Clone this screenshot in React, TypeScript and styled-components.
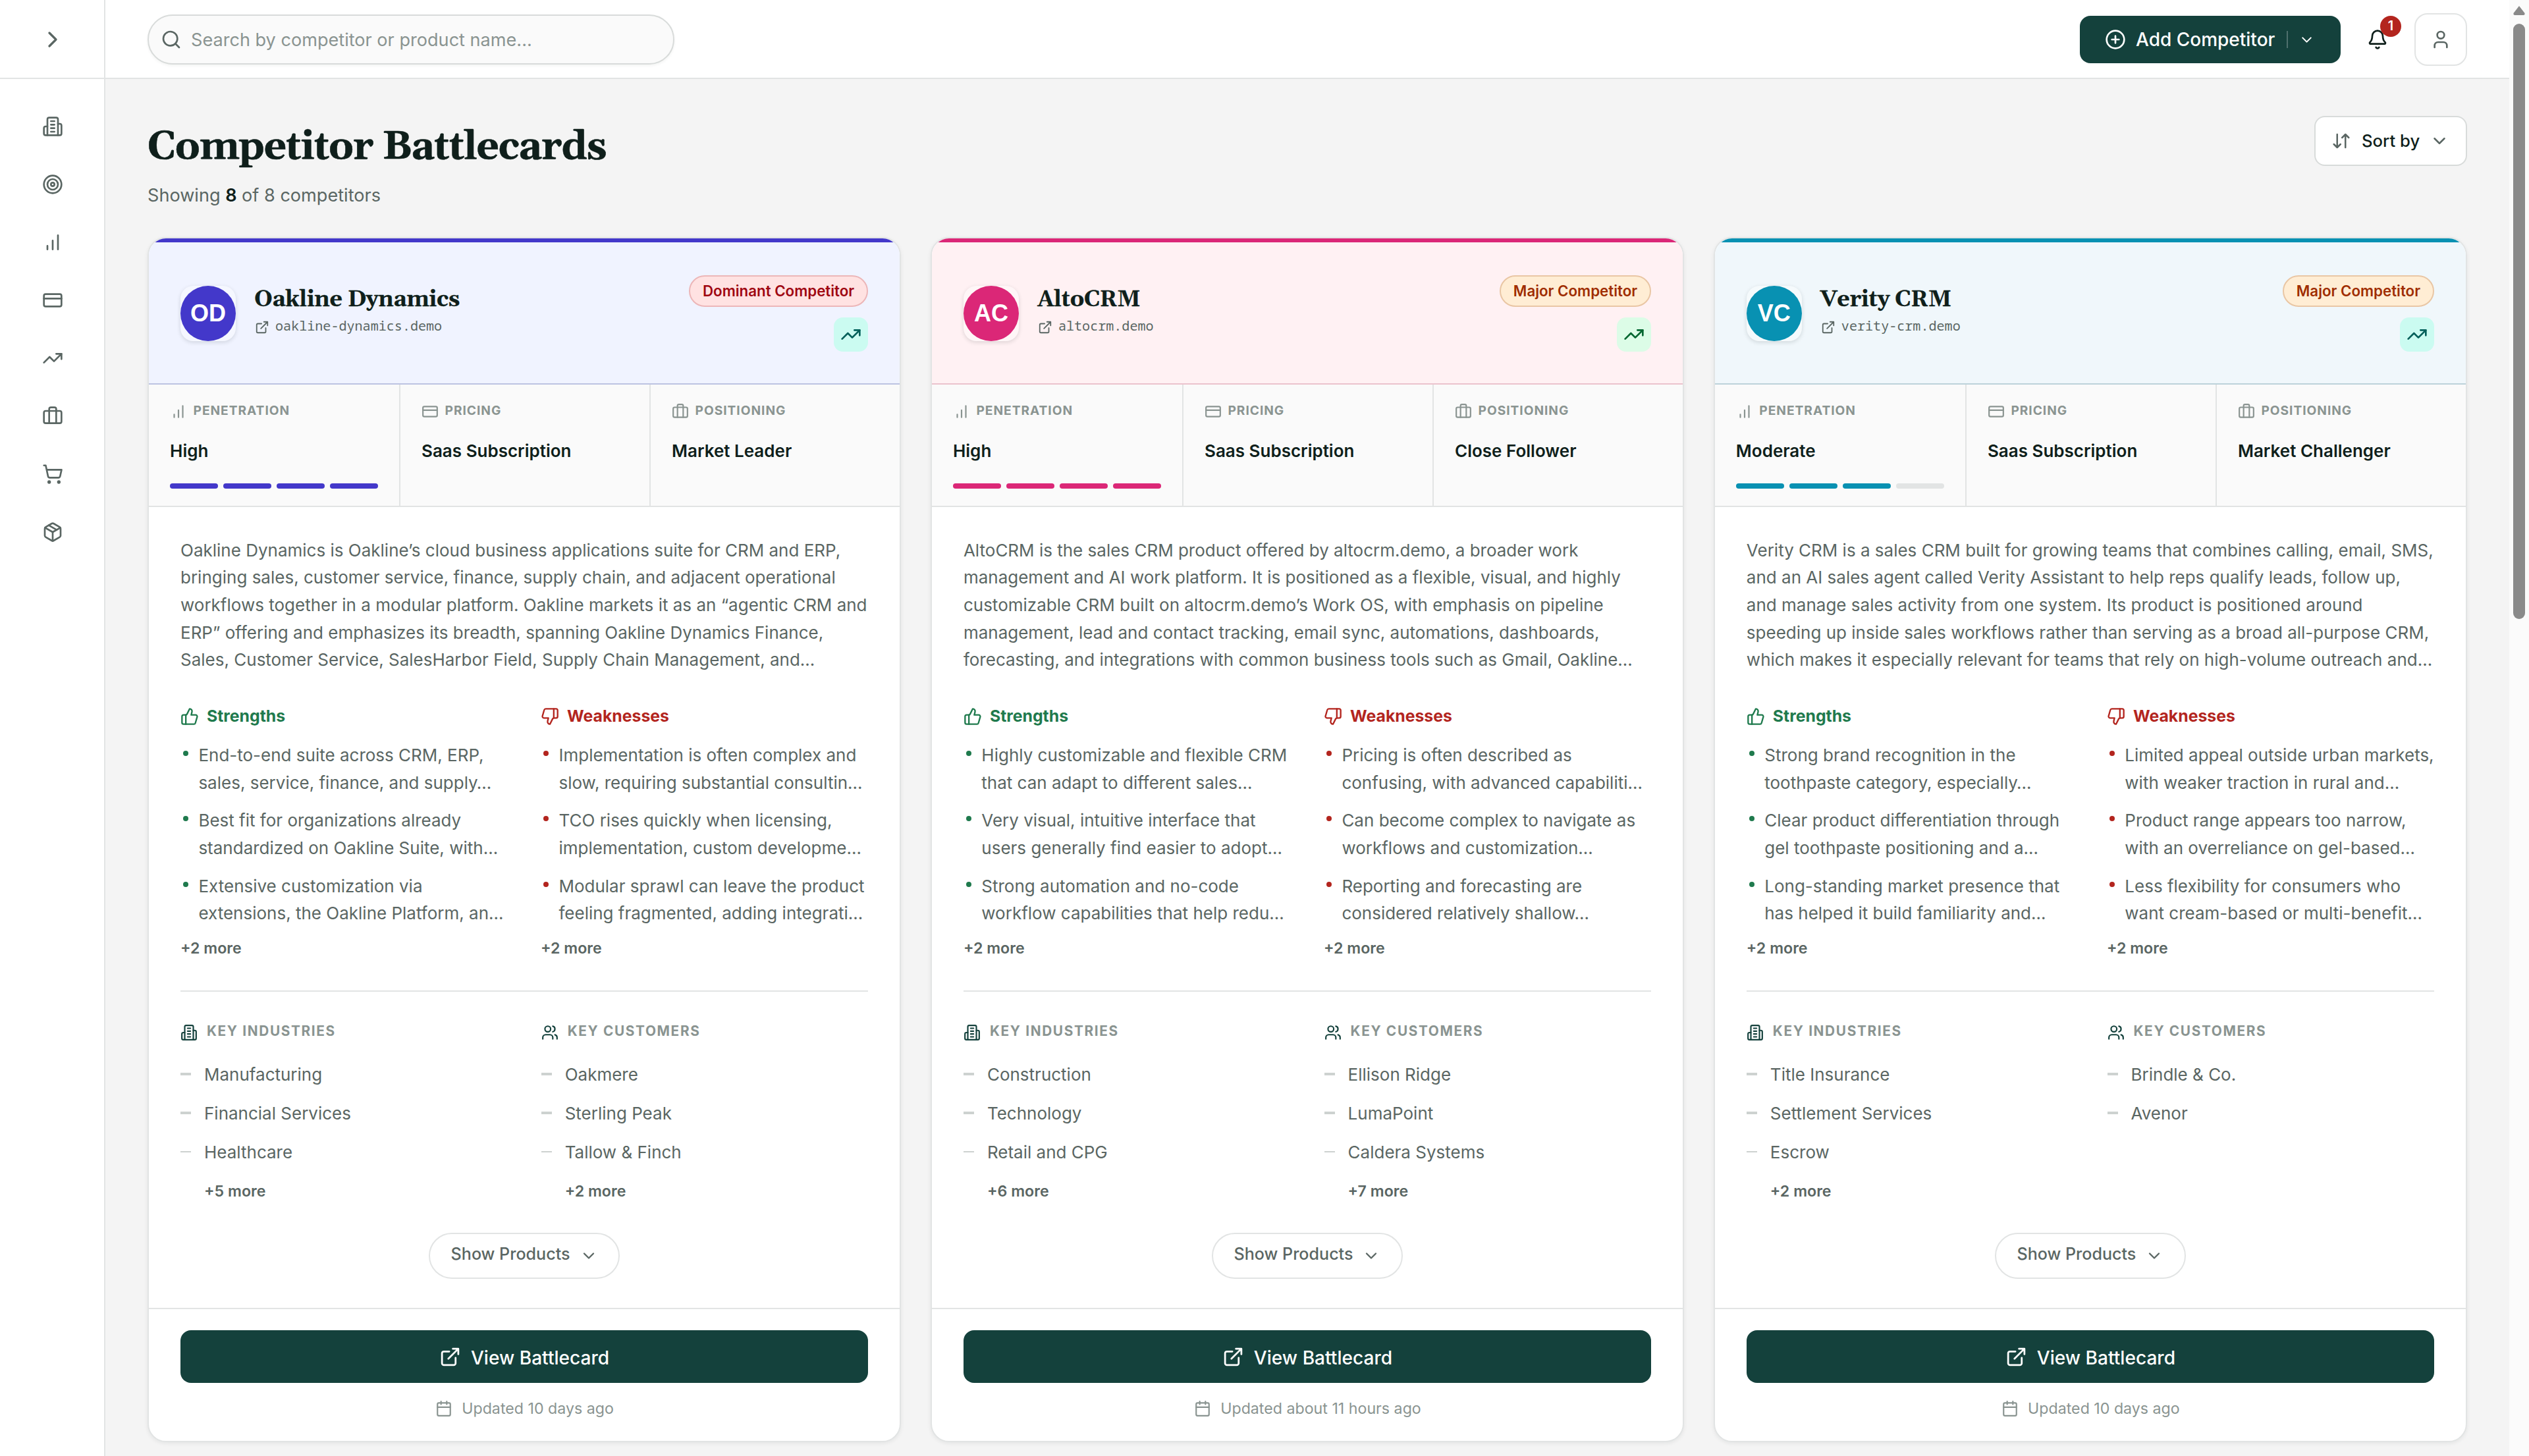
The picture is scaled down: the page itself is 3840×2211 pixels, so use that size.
import React from 'react';
import styled, { createGlobalStyle } from 'styled-components';

const SANS = `Inter, "Liberation Sans", sans-serif`;
const SERIF = `Gelasio, Georgia, "Liberation Serif", serif`;
const MONO = `"Noto Sans Mono", "DejaVu Sans Mono", "Liberation Mono", monospace`;

const ink = '#0f1f1b';
const body = '#5a6663';
const muted = '#8a9491';
const line = '#e2e4e4';
const brand = '#14413c';

const Global = createGlobalStyle`
  * { box-sizing: border-box; }
  html, body { margin: 0; padding: 0; background: #f4f4f4; }
  body { font-family: ${SANS}; color: ${ink}; overflow: hidden; }
  h1, h2, h3, p, ul { margin: 0; padding: 0; font-weight: inherit; }
  ul { list-style: none; }
  button { font: inherit; cursor: pointer; }
`;

/* ---------- icons ---------- */

const ICONS: Record<string, React.ReactNode> = {
  chevronRight: <path d="m9 18 6-6-6-6" />,
  chevronDown: <path d="m6 9 6 6 6-6" />,
  search: (<><circle cx="11" cy="11" r="8" /><path d="m21 21-4.3-4.3" /></>),
  building: (
    <>
      <path d="M6 22V4a2 2 0 0 1 2-2h8a2 2 0 0 1 2 2v18Z" />
      <path d="M6 12H4a2 2 0 0 0-2 2v6a2 2 0 0 0 2 2h2" />
      <path d="M18 9h2a2 2 0 0 1 2 2v9a2 2 0 0 1-2 2h-2" />
      <path d="M10 6h4M10 10h4M10 14h4M10 18h4" />
    </>
  ),
  target: (<><circle cx="12" cy="12" r="10" /><circle cx="12" cy="12" r="6" /><circle cx="12" cy="12" r="2" /></>),
  bars: <path d="M12 20V10M18 20V4M6 20v-4" />,
  card: (<><rect x="2" y="5" width="20" height="14" rx="2" /><path d="M2 10h20" /></>),
  trend: (<><path d="m22 7-8.500 8.500-5-5L2 17" /><path d="M16 7h6v6" /></>),
  briefcase: (<><path d="M16 20V4a2 2 0 0 0-2-2h-4a2 2 0 0 0-2 2v16" /><rect x="2" y="6" width="20" height="14" rx="2" /></>),
  cart: (
    <>
      <circle cx="8" cy="21" r="1" /><circle cx="19" cy="21" r="1" />
      <path d="M2.050 2.050h2l2.660 12.420a2 2 0 0 0 2 1.580h9.780a2 2 0 0 0 1.950-1.570l1.650-7.430H5.120" />
    </>
  ),
  box: (
    <>
      <path d="m7.500 4.270 9 5.150" />
      <path d="M21 8a2 2 0 0 0-1-1.730l-7-4a2 2 0 0 0-2 0l-7 4A2 2 0 0 0 3 8v8a2 2 0 0 0 1 1.730l7 4a2 2 0 0 0 2 0l7-4A2 2 0 0 0 21 16Z" />
      <path d="m3.300 7 8.700 5 8.700-5" /><path d="M12 22V12" />
    </>
  ),
  plus: (<><circle cx="12" cy="12" r="10" /><path d="M8 12h8M12 8v8" /></>),
  bell: (
    <>
      <path d="M10.268 21a2 2 0 0 0 3.464 0" />
      <path d="M3.262 15.326A1 1 0 0 0 4 17h16a1 1 0 0 0 .74-1.673C19.410 13.956 18 12.499 18 8A6 6 0 0 0 6 8c0 4.499-1.411 5.956-2.738 7.326" />
    </>
  ),
  user: (<><path d="M19 21v-2a4 4 0 0 0-4-4H9a4 4 0 0 0-4 4v2" /><circle cx="12" cy="7" r="4" /></>),
  sort: <path d="m3 16 4 4 4-4M7 20V4M21 8l-4-4-4 4M17 4v16" />,
  external: (
    <>
      <path d="M15 3h6v6M10 14 21 3" />
      <path d="M18 13v6a2 2 0 0 1-2 2H5a2 2 0 0 1-2-2V8a2 2 0 0 1 2-2h6" />
    </>
  ),
  up: (
    <>
      <path d="M7 10v12" />
      <path d="M15 5.880 14 10h5.830a2 2 0 0 1 1.920 2.560l-2.330 8A2 2 0 0 1 17.500 22H4a2 2 0 0 1-2-2v-8a2 2 0 0 1 2-2h2.760a2 2 0 0 0 1.790-1.110L12 2a3.130 3.130 0 0 1 3 3.880Z" />
    </>
  ),
  down: (
    <>
      <path d="M17 14V2" />
      <path d="M9 18.120 10 14H4.170a2 2 0 0 1-1.920-2.560l2.330-8A2 2 0 0 1 6.500 2H20a2 2 0 0 1 2 2v8a2 2 0 0 1-2 2h-2.760a2 2 0 0 0-1.790 1.110L12 22a3.130 3.130 0 0 1-3-3.880Z" />
    </>
  ),
  users: (
    <>
      <path d="M16 21v-2a4 4 0 0 0-4-4H6a4 4 0 0 0-4 4v2" /><circle cx="9" cy="7" r="4" />
      <path d="M22 21v-2a4 4 0 0 0-3-3.870M16 3.130a4 4 0 0 1 0 7.750" />
    </>
  ),
  calendar: (<><path d="M8 2v4M16 2v4M3 10h18" /><rect x="3" y="4" width="18" height="18" rx="2" /></>),
};

const Svg = styled.svg<{ $size: number }>`
  display: block;
  flex: none;
  width: ${(p) => p.$size}px;
  height: ${(p) => p.$size}px;
  fill: none;
  stroke: currentColor;
  stroke-linecap: round;
  stroke-linejoin: round;
`;

const Icon = ({ name, size = 32, stroke = 2 }: { name: string; size?: number; stroke?: number }) => (
  <Svg viewBox="0 0 24 24" $size={size} strokeWidth={stroke} aria-hidden>
    {ICONS[name]}
  </Svg>
);

/* ---------- shell ---------- */

const Shell = styled.div`
  display: grid;
  grid-template-columns: 160px minmax(0, 1fr) 30px;
  height: 2211px;
  overflow: hidden;
`;

const Sidebar = styled.aside`
  background: #fff;
  border-right: 2px solid ${line};
  color: ${body};
`;

const SidebarTop = styled.div`
  height: 120px;
  width: 158px;
  padding: 2px 0 0 2px;
  display: flex;
  align-items: center;
  justify-content: center;
  border-bottom: 2px solid ${line};
`;

const SideNav = styled.nav`
  display: flex;
  flex-direction: column;
  align-items: center;
  gap: 56px;
  padding: 56px 0 0 2px;
`;

const Main = styled.div`
  min-width: 0;
  display: flex;
  flex-direction: column;
`;

const TopBar = styled.header`
  flex: none;
  height: 120px;
  padding: 0 64px;
  display: flex;
  align-items: center;
  justify-content: space-between;
  background: #fff;
  border-bottom: 2px solid ${line};
`;

const Search = styled.label`
  width: 800px;
  height: 76px;
  margin-top: 2px;
  padding-left: 18px;
  display: flex;
  align-items: center;
  gap: 14px;
  border: 2px solid #d8dbda;
  border-radius: 38px;
  background: #fafafa;
  box-shadow: 0 2px 4px rgba(15, 31, 27, 0.05);
  color: ${body};
`;

const SearchText = styled.span`
  margin-top: 1px;
  font-size: 27.1px;
  color: ${muted};
`;

const Tools = styled.div`
  display: flex;
  align-items: center;
  margin-top: 2px;
`;

const AddButton = styled.button`
  height: 72px;
  width: 396px;
  padding: 0 0 0 38px;
  display: flex;
  align-items: center;
  border: 0;
  border-radius: 16px;
  background: ${brand};
  color: #fff;
  font-size: 28px;
  font-weight: 500;
`;

const AddLabel = styled.span`
  margin: 0 18px 0 15px;
`;

const AddSplit = styled.span`
  width: 2px;
  height: 26px;
  margin-right: 16px;
  background: rgba(255, 255, 255, 0.25);
`;

const BellButton = styled.span`
  position: relative;
  margin: 0 40px;
  color: ${ink};
`;

const Count = styled.span`
  position: absolute;
  left: 20px;
  top: -20px;
  width: 32px;
  height: 32px;
  border-radius: 50%;
  background: #b3251e;
  color: #fff;
  font-size: 20px;
  font-weight: 600;
  line-height: 30px;
  text-align: center;
`;

const UserButton = styled.button`
  width: 80px;
  height: 80px;
  padding: 0;
  display: flex;
  align-items: center;
  justify-content: center;
  border: 2px solid ${line};
  border-radius: 20px;
  background: #fff;
  color: ${body};
`;

const Track = styled.div`
  background: #fbfbfb;
  display: flex;
  flex-direction: column;
  align-items: center;
  padding-top: 9px;
`;

const Arrow = styled.svg`
  display: block;
  width: 18px;
  height: 14px;
  fill: #8a8a8a;
`;

const Thumb = styled.div`
  width: 18px;
  height: 904px;
  margin-top: 13px;
  border-radius: 9px;
  background: #8a8a8a;
`;

/* ---------- page ---------- */

const Page = styled.main`
  padding: 56px 64px 0;
  flex: 1;
  background: #f4f4f4;
`;

const PageHead = styled.div`
  height: 184px;
  display: flex;
  justify-content: space-between;
  align-items: flex-start;
`;

const Title = styled.h1`
  font-family: ${SERIF};
  font-size: 60px;
  font-weight: 700;
  line-height: 72px;
  padding-top: 12px;
  letter-spacing: -1.2px;
  -webkit-text-stroke: 0.6px ${ink};
`;

const Showing = styled.p`
  margin-top: 17px;
  font-size: 27.1px;
  line-height: 40px;
  color: ${body};

  b {
    font-weight: 600;
    color: ${ink};
  }
`;

const SortButton = styled.button`
  width: 232px;
  height: 76px;
  padding: 0 0 0 24px;
  display: flex;
  align-items: center;
  border: 2px solid #d8dbda;
  border-radius: 16px;
  background: #fff;
  font-size: 25.7px;
  font-weight: 500;
  color: ${body};

  span {
    margin: -2px 15px 0 16px;
    color: ${ink};
  }
`;

const Cards = styled.div`
  display: grid;
  grid-template-columns: repeat(3, minmax(0, 1fr));
  gap: 44.8px;
`;

const Card = styled.article`
  height: 1830px;
  display: flex;
  flex-direction: column;
  overflow: hidden;
  border: 2px solid ${line};
  border-radius: 28px;
  background: #fff;
  box-shadow: 0 2px 6px rgba(15, 31, 27, 0.07);
`;

const CardHead = styled.header<{ $accent: string; $tint: string; $edge: string }>`
  height: 222px;
  padding: 50px 48px 48px;
  display: flex;
  align-items: center;
  border-top: 6px solid ${(p) => p.$accent};
  border-bottom: 2px solid ${(p) => p.$edge};
  background: ${(p) => p.$tint};
`;

const AvatarFrame = styled.div`
  width: 84px;
  height: 84px;
  margin-right: 28px;
  border-radius: 20px;
  background: rgba(255, 255, 255, 0.35);
  box-shadow: 0 2px 6px rgba(15, 31, 27, 0.14);
`;

const Avatar = styled.div<{ $accent: string }>`
  height: 84px;
  border-radius: 50%;
  background: ${(p) => p.$accent};
  color: #fff;
  font: 700 36px/84px "Liberation Sans", sans-serif;
  text-align: center;
`;

const Identity = styled.div`
  flex: 1;
  min-width: 0;
  margin-top: -9px;
`;

const Name = styled.h2`
  font-family: ${SERIF};
  font-size: 34px;
  font-weight: 700;
  line-height: 44px;
  letter-spacing: -0.4px;
  -webkit-text-stroke: 0.3px ${ink};
`;

const Domain = styled.div`
  display: flex;
  align-items: center;
  gap: 9px;
  margin-top: 2px;
  padding-left: 1px;
  font-family: ${MONO};
  font-size: 20.1px;
  line-height: 32px;
  color: ${body};

  svg {
    margin-top: 4px;
  }
`;

const Flags = styled.div`
  display: flex;
  flex-direction: column;
  align-items: flex-end;
  gap: 16px;
`;

const Threat = styled.span<{ $dominant: boolean }>`
  height: 48px;
  padding: 0 19px;
  border: 2px solid ${(p) => (p.$dominant ? '#ecb6b8' : '#e9c6a4')};
  border-radius: 24px;
  background: ${(p) => (p.$dominant ? '#ffe2e2' : '#ffedd4')};
  color: ${(p) => (p.$dominant ? '#9f0712' : '#9f2d00')};
  font-size: 22.3px;
  font-weight: 600;
  line-height: 44px;
`;

const TrendTile = styled.span<{ $green: boolean }>`
  width: 52px;
  height: 52px;
  display: flex;
  align-items: center;
  justify-content: center;
  border-radius: 14px;
  background: ${(p) => (p.$green ? '#dcfce7' : '#cbfbf1')};
  color: ${(p) => (p.$green ? '#016630' : '#005f5a')};
`;

const Stats = styled.div`
  height: 186px;
  display: grid;
  grid-template-columns: repeat(3, 1fr);
  border-bottom: 2px solid ${line};
  background: #fafafa;
`;

const Stat = styled.div`
  padding: 24px 32px 0;

  & + & {
    border-left: 2px solid ${line};
  }
`;

const StatLabel = styled.div`
  display: flex;
  gap: 9.5px;
  font-size: 19.2px;
  font-weight: 700;
  line-height: 30px;
  letter-spacing: 0.96px;
  color: ${muted};

  svg {
    margin-top: 4px;
  }
`;

const StatValue = styled.div`
  margin-top: 27px;
  font-size: 26px;
  font-weight: 600;
  line-height: 40px;
`;

const Meter = styled.div`
  display: grid;
  grid-template-columns: repeat(4, 1fr);
  gap: 8px;
  margin-top: 29px;
`;

const Segment = styled.span<{ $color: string }>`
  height: 8px;
  border-radius: 4px;
  background: ${(p) => p.$color};
`;

const Body = styled.div`
  padding: 44.8px 48px 0;
  height: 1216px;
  font-size: 26px;
  line-height: 41.6px;
  color: ${body};
`;

const Line = styled.span`
  display: block;
  white-space: nowrap;
`;

const Columns = styled.div<{ $top: number; $gap: number }>`
  display: grid;
  grid-template-columns: 1fr 1fr;
  column-gap: ${(p) => p.$gap}px;
  padding-top: ${(p) => p.$top}px;
`;

const PointsHead = styled.h3<{ $color: string }>`
  display: flex;
  align-items: center;
  gap: 12px;
  height: 32px;
  margin-bottom: 22.4px;
  font-size: 24.8px;
  font-weight: 700;
  color: ${(p) => p.$color};
`;

const Point = styled.li<{ $color: string }>`
  display: flex;
  gap: 15.4px;
  padding-left: 4px;
  margin-bottom: 16px;

  &::before {
    content: '';
    flex: none;
    width: 8px;
    height: 8px;
    margin-top: 14px;
    border-radius: 50%;
    background: ${(p) => p.$color};
  }
`;

const More = styled.div<{ $indent?: boolean }>`
  padding: ${(p) => (p.$indent ? '5px 0 0 36px' : '0')};
  font-size: 23.2px;
  font-weight: 600;
  line-height: 32px;
`;

const Divided = styled.div`
  margin-top: 48px;
  border-top: 2px solid ${line};
`;

const FactsHead = styled.h3`
  display: flex;
  align-items: center;
  gap: 14px;
  height: 32px;
  margin-bottom: 29.6px;
  font-size: 20.8px;
  font-weight: 700;
  letter-spacing: 1.64px;
  color: ${muted};

  svg {
    margin-top: 5px;
    color: ${brand};
  }
`;

const Fact = styled.li`
  display: flex;
  align-items: center;
  gap: 20px;
  height: 41.6px;
  margin-bottom: 17.4px;

  &::before {
    content: '';
    width: 16px;
    height: 4px;
    margin-top: -2px;
    background: #cdd2d0;
  }

  &:nth-child(3)::before {
    height: 2px;
  }
`;

const ProductsRow = styled.div`
  display: flex;
  justify-content: center;
  margin-top: 46.4px;
`;

const ProductsButton = styled.button`
  width: 290px;
  height: 70px;
  padding: 0;
  display: flex;
  align-items: center;
  justify-content: center;
  gap: 14px;
  border: 2px solid ${line};
  border-radius: 35px;
  background: #fff;
  color: ${body};
  font-size: 25.1px;
  font-weight: 500;

  span {
    margin-top: -3px;
  }
`;

const CardFoot = styled.footer`
  flex: 1;
  padding: 32px 48px 0;
  border-top: 2px solid ${line};
`;

const ViewButton = styled.button`
  width: 100%;
  height: 80px;
  padding: 0;
  display: flex;
  align-items: center;
  justify-content: center;
  gap: 15px;
  border: 0;
  border-radius: 16px;
  background: ${brand};
  color: #fff;
  font-size: 28.1px;
  font-weight: 500;

  span {
    margin-top: 3px;
  }
`;

const Updated = styled.div`
  display: flex;
  align-items: center;
  justify-content: center;
  gap: 14px;
  margin-top: 22px;
  padding-left: 1px;
  font-size: 23.2px;
  line-height: 34px;
  color: ${muted};
`;

/* ---------- data ---------- */

type Competitor = {
  name: string;
  initials: string;
  domain: string;
  accent: string;
  tint: string;
  edge: string;
  dominant?: boolean;
  greenTrend?: boolean;
  penetration: string;
  level: number;
  positioning: string;
  about: string[];
  strengths: string[][];
  weaknesses: string[][];
  industries: string[];
  moreIndustries: string;
  customers: string[];
  moreCustomers?: string;
  updated: string;
};

const COMPETITORS: Competitor[] = [
  {
    name: 'Oakline Dynamics',
    initials: 'OD',
    domain: 'oakline-dynamics.demo',
    accent: '#4338ca',
    tint: '#f0f3ff',
    edge: '#bcc3e2',
    dominant: true,
    penetration: 'High',
    level: 4,
    positioning: 'Market Leader',
    about: [
      'Oakline Dynamics is Oakline’s cloud business applications suite for CRM and ERP,',
      'bringing sales, customer service, finance, supply chain, and adjacent operational',
      'workflows together in a modular platform. Oakline markets it as an “agentic CRM and',
      'ERP” offering and emphasizes its breadth, spanning Oakline Dynamics Finance,',
      'Sales, Customer Service, SalesHarbor Field, Supply Chain Management, and…',
    ],
    strengths: [
      ['End-to-end suite across CRM, ERP,', 'sales, service, finance, and supply…'],
      ['Best fit for organizations already', 'standardized on Oakline Suite, with…'],
      ['Extensive customization via', 'extensions, the Oakline Platform, an…'],
    ],
    weaknesses: [
      ['Implementation is often complex and', 'slow, requiring substantial consultin…'],
      ['TCO rises quickly when licensing,', 'implementation, custom developme…'],
      ['Modular sprawl can leave the product', 'feeling fragmented, adding integrati…'],
    ],
    industries: ['Manufacturing', 'Financial Services', 'Healthcare'],
    moreIndustries: '+5 more',
    customers: ['Oakmere', 'Sterling Peak', 'Tallow & Finch'],
    moreCustomers: '+2 more',
    updated: 'Updated 10 days ago',
  },
  {
    name: 'AltoCRM',
    initials: 'AC',
    domain: 'altocrm.demo',
    accent: '#db2777',
    tint: '#fff1f3',
    edge: '#ebc3cd',
    greenTrend: true,
    penetration: 'High',
    level: 4,
    positioning: 'Close Follower',
    about: [
      'AltoCRM is the sales CRM product offered by altocrm.demo, a broader work',
      'management and AI work platform. It is positioned as a flexible, visual, and highly',
      'customizable CRM built on altocrm.demo’s Work OS, with emphasis on pipeline',
      'management, lead and contact tracking, email sync, automations, dashboards,',
      'forecasting, and integrations with common business tools such as Gmail, Oakline…',
    ],
    strengths: [
      ['Highly customizable and flexible CRM', 'that can adapt to different sales…'],
      ['Very visual, intuitive interface that', 'users generally find easier to adopt…'],
      ['Strong automation and no-code', 'workflow capabilities that help redu…'],
    ],
    weaknesses: [
      ['Pricing is often described as', 'confusing, with advanced capabiliti…'],
      ['Can become complex to navigate as', 'workflows and customization…'],
      ['Reporting and forecasting are', 'considered relatively shallow…'],
    ],
    industries: ['Construction', 'Technology', 'Retail and CPG'],
    moreIndustries: '+6 more',
    customers: ['Ellison Ridge', 'LumaPoint', 'Caldera Systems'],
    moreCustomers: '+7 more',
    updated: 'Updated about 11 hours ago',
  },
  {
    name: 'Verity CRM',
    initials: 'VC',
    domain: 'verity-crm.demo',
    accent: '#0891b2',
    tint: '#f0f7fb',
    edge: '#bcd2da',
    penetration: 'Moderate',
    level: 3,
    positioning: 'Market Challenger',
    about: [
      'Verity CRM is a sales CRM built for growing teams that combines calling, email, SMS,',
      'and an AI sales agent called Verity Assistant to help reps qualify leads, follow up,',
      'and manage sales activity from one system. Its product is positioned around',
      'speeding up inside sales workflows rather than serving as a broad all-purpose CRM,',
      'which makes it especially relevant for teams that rely on high-volume outreach and…',
    ],
    strengths: [
      ['Strong brand recognition in the', 'toothpaste category, especially…'],
      ['Clear product differentiation through', 'gel toothpaste positioning and a…'],
      ['Long-standing market presence that', 'has helped it build familiarity and…'],
    ],
    weaknesses: [
      ['Limited appeal outside urban markets,', 'with weaker traction in rural and…'],
      ['Product range appears too narrow,', 'with an overreliance on gel-based…'],
      ['Less flexibility for consumers who', 'want cream-based or multi-benefit…'],
    ],
    industries: ['Title Insurance', 'Settlement Services', 'Escrow'],
    moreIndustries: '+2 more',
    customers: ['Brindle & Co.', 'Avenor'],
    updated: 'Updated 10 days ago',
  },
];

const NAV = ['building', 'target', 'bars', 'card', 'trend', 'briefcase', 'cart', 'box'];

/* ---------- parts ---------- */

const Lines = ({ text }: { text: string[] }) => (
  <div>
    {text.map((t) => (
      <Line key={t}>{t}</Line>
    ))}
  </div>
);

const Points = ({ title, icon, color, items }: { title: string; icon: string; color: string; items: string[][] }) => (
  <section>
    <PointsHead $color={color}>
      <Icon name={icon} size={28} />
      {title}
    </PointsHead>
    <ul>
      {items.map((item) => (
        <Point key={item[0]} $color={color}>
          <Lines text={item} />
        </Point>
      ))}
    </ul>
    <More>+2 more</More>
  </section>
);

const Facts = ({ title, icon, items, more }: { title: string; icon: string; items: string[]; more?: string }) => (
  <section>
    <FactsHead>
      <Icon name={icon} size={26} />
      {title}
    </FactsHead>
    <ul>
      {items.map((item) => (
        <Fact key={item}>{item}</Fact>
      ))}
    </ul>
    {more && <More $indent>{more}</More>}
  </section>
);

const Battlecard = ({ c }: { c: Competitor }) => (
  <Card>
    <CardHead $accent={c.accent} $tint={c.tint} $edge={c.edge}>
      <AvatarFrame>
        <Avatar $accent={c.accent}>{c.initials}</Avatar>
      </AvatarFrame>
      <Identity>
        <Name>{c.name}</Name>
        <Domain>
          <Icon name="external" size={22} />
          {c.domain}
        </Domain>
      </Identity>
      <Flags>
        <Threat $dominant={!!c.dominant}>{c.dominant ? 'Dominant Competitor' : 'Major Competitor'}</Threat>
        <TrendTile $green={!!c.greenTrend}>
          <Icon name="trend" size={32} />
        </TrendTile>
      </Flags>
    </CardHead>
    <Stats>
      <Stat>
        <StatLabel><Icon name="bars" size={26} />PENETRATION</StatLabel>
        <StatValue>{c.penetration}</StatValue>
        <Meter>
          {[0, 1, 2, 3].map((i) => (
            <Segment key={i} $color={i < c.level ? c.accent : line} />
          ))}
        </Meter>
      </Stat>
      <Stat>
        <StatLabel><Icon name="card" size={26} />PRICING</StatLabel>
        <StatValue>Saas Subscription</StatValue>
      </Stat>
      <Stat>
        <StatLabel><Icon name="briefcase" size={26} />POSITIONING</StatLabel>
        <StatValue>{c.positioning}</StatValue>
      </Stat>
    </Stats>
    <Body>
      <Lines text={c.about} />
      <Columns $top={49} $gap={50}>
        <Points title="Strengths" icon="up" color="#1f7a4d" items={c.strengths} />
        <Points title="Weaknesses" icon="down" color="#b3251e" items={c.weaknesses} />
      </Columns>
      <Divided>
        <Columns $top={44} $gap={51.2}>
          <Facts title="KEY INDUSTRIES" icon="building" items={c.industries} more={c.moreIndustries} />
          <Facts title="KEY CUSTOMERS" icon="users" items={c.customers} more={c.moreCustomers} />
        </Columns>
      </Divided>
      <ProductsRow>
        <ProductsButton>
          <span>Show Products</span>
          <Icon name="chevronDown" size={28} />
        </ProductsButton>
      </ProductsRow>
    </Body>
    <CardFoot>
      <ViewButton>
        <Icon name="external" size={33} />
        <span>View Battlecard</span>
      </ViewButton>
      <Updated>
        <Icon name="calendar" size={26} />
        {c.updated}
      </Updated>
    </CardFoot>
  </Card>
);

export default function App() {
  return (
    <>
      <Global />
      <Shell>
        <Sidebar>
          <SidebarTop>
            <Icon name="chevronRight" size={40} />
          </SidebarTop>
          <SideNav>
            {NAV.map((n) => (
              <Icon key={n} name={n} />
            ))}
          </SideNav>
        </Sidebar>
        <Main>
          <TopBar>
            <Search>
              <Icon name="search" />
              <SearchText>Search by competitor or product name...</SearchText>
            </Search>
            <Tools>
              <AddButton>
                <Icon name="plus" />
                <AddLabel>Add Competitor</AddLabel>
                <AddSplit />
                <Icon name="chevronDown" size={25} />
              </AddButton>
              <BellButton>
                <Icon name="bell" />
                <Count>1</Count>
              </BellButton>
              <UserButton>
                <Icon name="user" />
              </UserButton>
            </Tools>
          </TopBar>
          <Page>
            <PageHead>
              <div>
                <Title>Competitor Battlecards</Title>
                <Showing>
                  Showing <b>8</b> of 8 competitors
                </Showing>
              </div>
              <SortButton>
                <Icon name="sort" size={30} />
                <span>Sort by</span>
                <Icon name="chevronDown" size={30} />
              </SortButton>
            </PageHead>
            <Cards>
              {COMPETITORS.map((c) => (
                <Battlecard key={c.name} c={c} />
              ))}
            </Cards>
          </Page>
        </Main>
        <Track>
          <Arrow viewBox="0 0 18 14">
            <path d="M9 0 L17.500 11 Q18 14 15.500 14 H2.500 Q0 14 0.500 11 Z" />
          </Arrow>
          <Thumb />
        </Track>
      </Shell>
    </>
  );
}
